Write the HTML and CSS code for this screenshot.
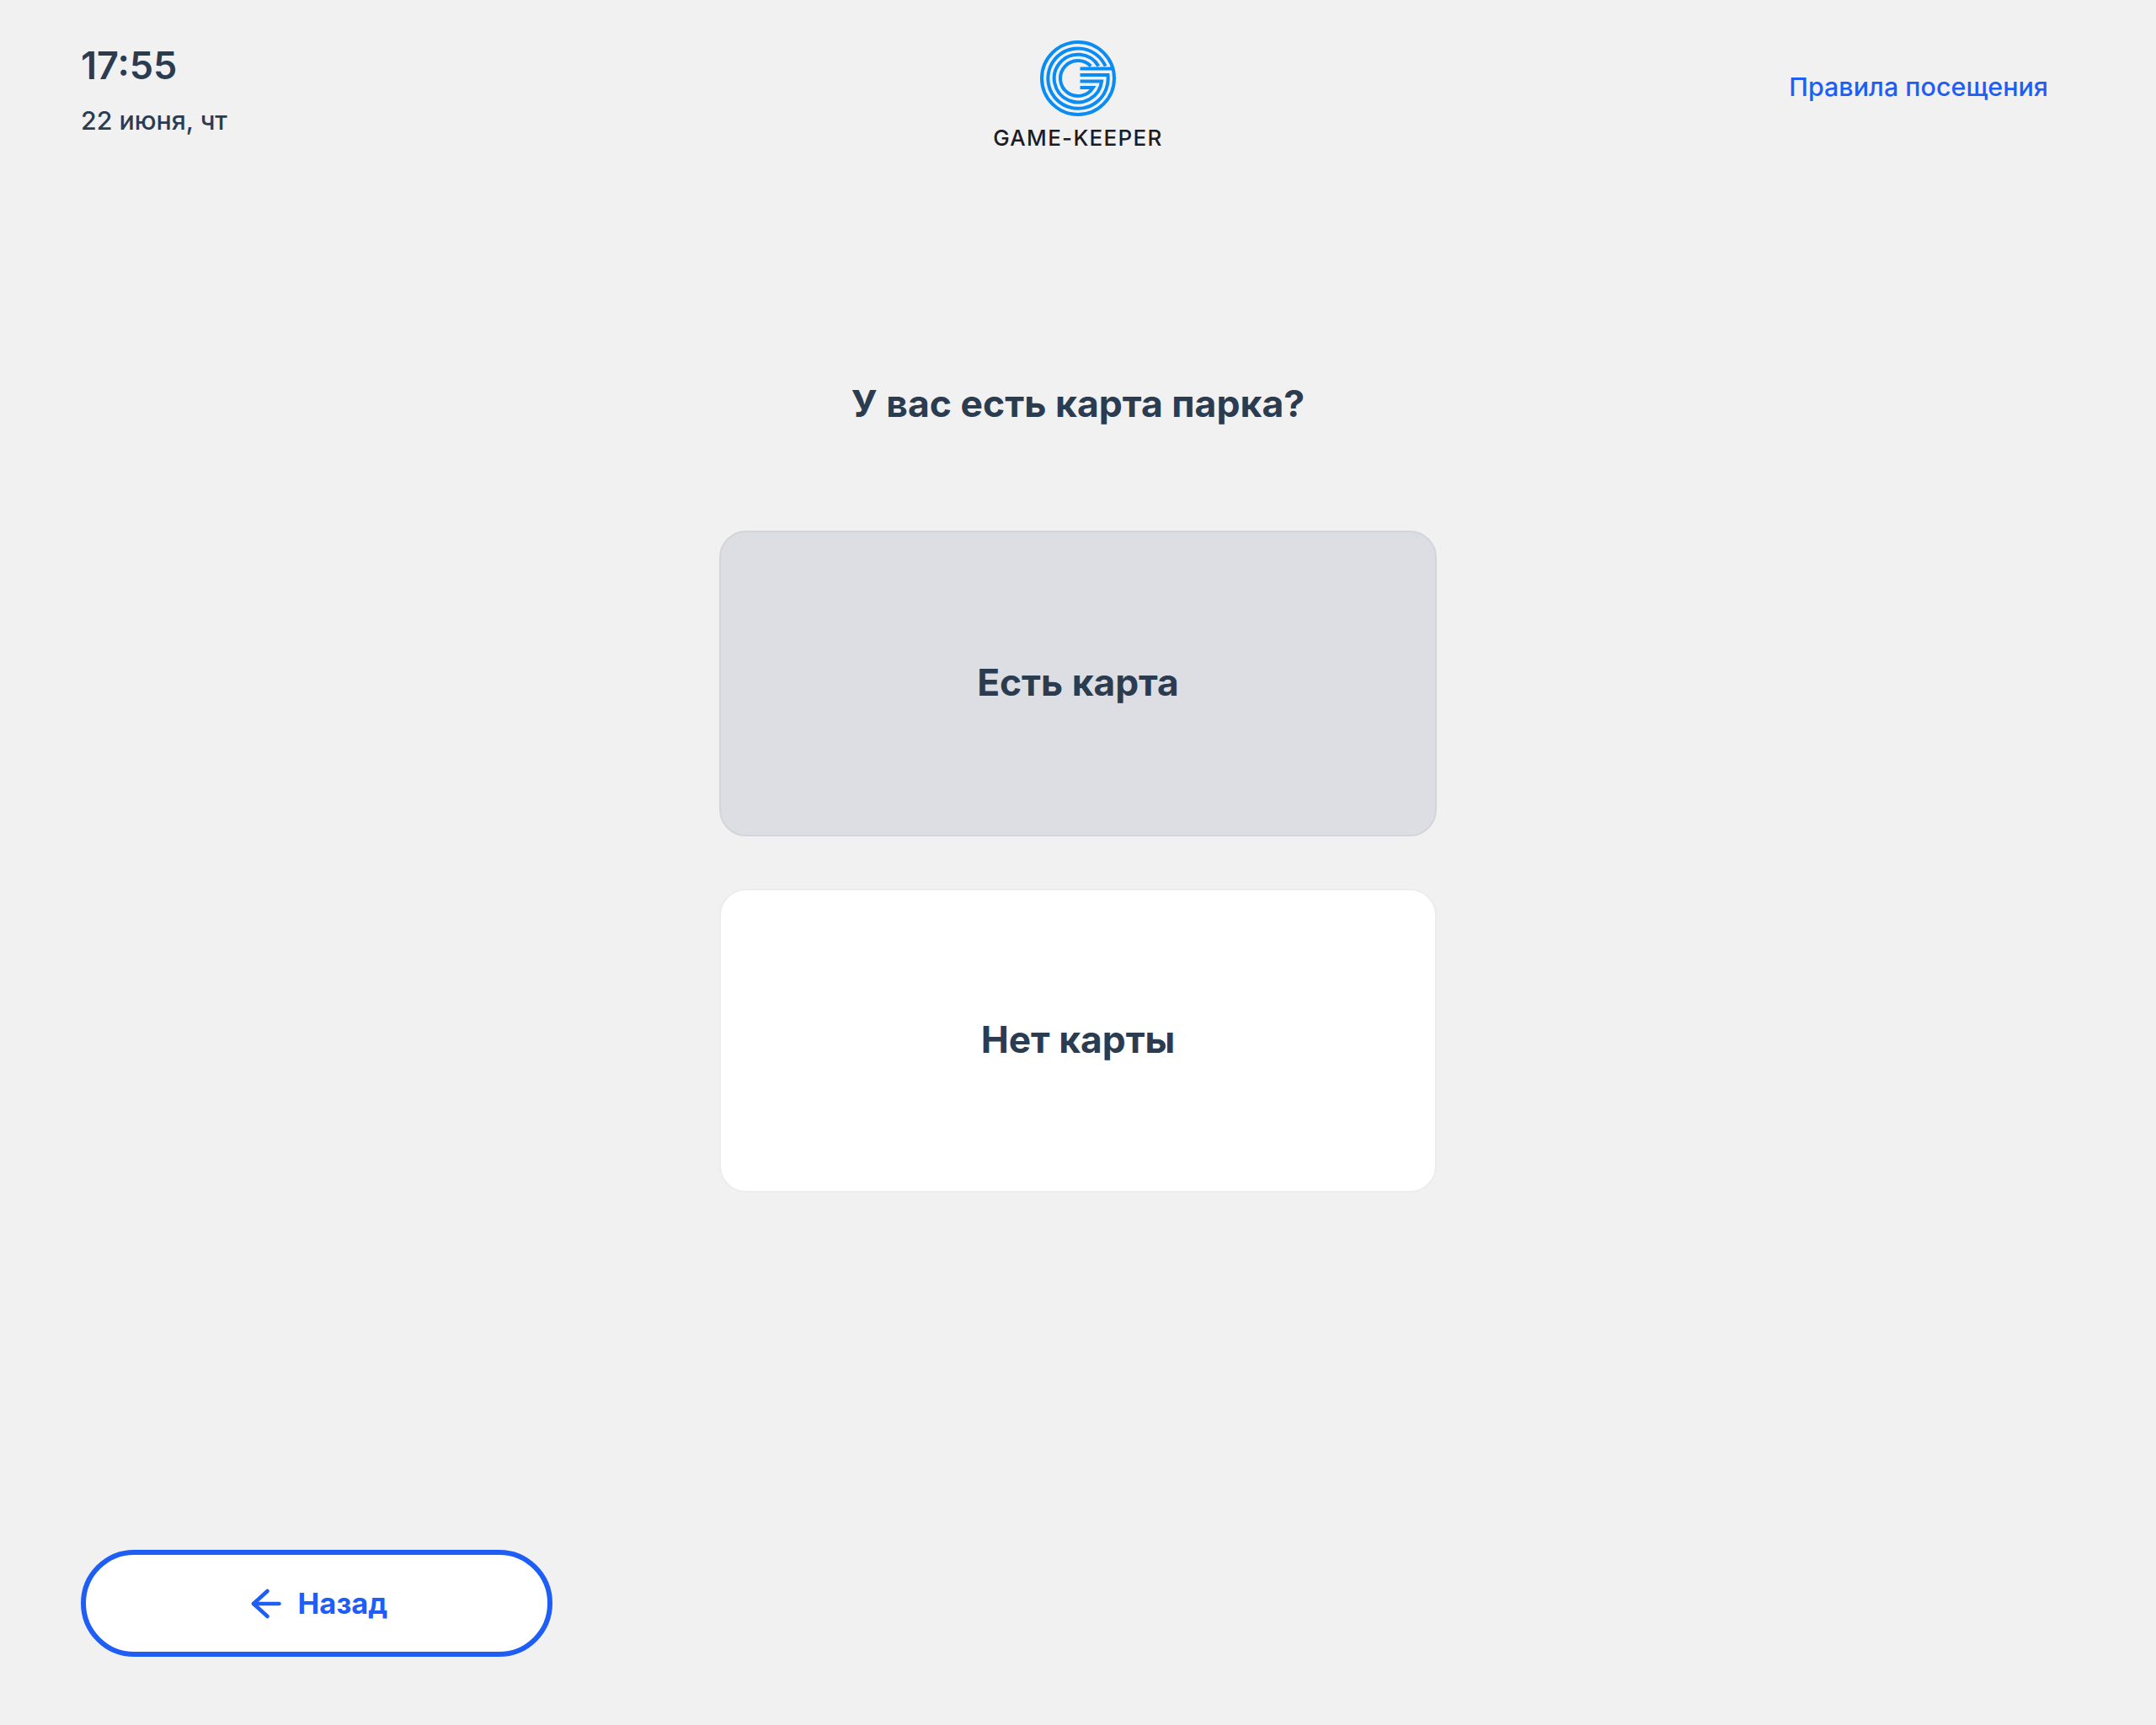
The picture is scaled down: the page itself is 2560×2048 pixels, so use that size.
FILE: index.html

```html
<!DOCTYPE html>
<html lang="ru">
<head>
    <meta charset="UTF-8" />
    <title>Game-Keeper</title>
    <link rel="stylesheet" href="styles.css">
</head>
<body>
    <div class="page">
        <header class="header">
            <div class="clock">
                <div class="clock-time">17:55</div>
                <div class="clock-date">22 июня, чт</div>
            </div>
            <div class="logo">
                <svg class="logo-mark" width="90" height="90" viewBox="0 0 90 90" fill="none" stroke="#0a8cf5" stroke-width="4">
                    <circle cx="45" cy="45" r="43" />
                    <path d="M47.500 33.500H87" />
                    <path d="M47.500 41H80.500A35.700 35.700 0 1 1 77.600 30.500" />
                    <path d="M47.500 48.500H73.100A28.300 28.300 0 1 1 69.300 30.500" />
                    <path d="M47.500 56H62.900A21 21 0 1 1 60.200 30.500" />
                </svg>
                <div class="logo-name">GAME-KEEPER</div>
            </div>
            <a class="rules-link" href="#">Правила посещения</a>
        </header>

        <main class="content">
            <h1 class="question">У вас есть карта парка?</h1>
            <div class="options">
                <button class="option option-active">Есть карта</button>
                <button class="option">Нет карты</button>
            </div>
        </main>

        <footer class="footer">
            <button class="back-btn">
                <svg width="36" height="36" viewBox="0 0 36 36" fill="none" stroke="#1f5ef5" stroke-width="4.500" stroke-linecap="round" stroke-linejoin="round">
                    <path d="M19.500 3L3 18L19.500 33" />
                    <path d="M3 18H33.500" />
                </svg>
                Назад
            </button>
        </footer>
    </div>
</body>
</html>
```

FILE: styles.css

```css
:root {
    --bg: #f1f1f2;
    --text: #2c3c50;
    --accent: #1f5ef5;
}
* {
    box-sizing: border-box;
}
body {
    margin: 0;
    background-color: var(--bg);
    color: var(--text);
    font-family: "Inter", "Noto Sans", sans-serif;
}
.page {
    height: 2048px;
    padding: 48px 128px 81px 96px;
    display: flex;
    flex-direction: column;
}
.header {
    display: grid;
    grid-template-columns: 1fr auto 1fr;
    align-items: start;
}
.clock-time {
    font-size: 45px;
    font-weight: 600;
    line-height: 60px;
}
.clock-date {
    font-size: 30.300px;
    font-weight: 500;
    line-height: 36px;
    margin-top: 17px;
}
.logo {
    display: flex;
    flex-direction: column;
    align-items: center;
    transform: translateX(16px);
}
.logo-name {
    font-size: 26px;
    font-weight: 500;
    line-height: 32px;
    letter-spacing: 1.300px;
    margin-top: 10px;
    color: #1a1c26;
}
.rules-link {
    justify-self: end;
    font-size: 30.500px;
    font-weight: 500;
    line-height: 36px;
    margin-top: 37px;
    color: var(--accent);
    text-decoration: none;
}
.content {
    display: flex;
    flex-direction: column;
    align-items: center;
    margin-left: 32px;
}
.question {
    font-size: 44.500px;
    font-weight: 700;
    line-height: 56px;
    margin: 271px 0 0;
}
.options {
    display: flex;
    flex-direction: column;
    gap: 62px;
    margin-top: 123px;
}
.option {
    width: 852px;
    height: 363px;
    padding: 0 0 3px;
    border: 2px solid #ececee;
    border-radius: 32px;
    background-color: #fff;
    color: var(--text);
    font-family: inherit;
    font-size: 44.300px;
    font-weight: 700;
}
.option + .option {
    height: 361px;
}
.option-active {
    background-color: #dddee3;
    border-color: #d4d5db;
}
.footer {
    margin-top: auto;
}
.back-btn {
    width: 560px;
    height: 127px;
    padding: 0 0 0 6px;
    border: 6px solid var(--accent);
    border-radius: 64px;
    background-color: #fff;
    color: var(--accent);
    font-family: inherit;
    font-size: 34.500px;
    font-weight: 700;
    display: flex;
    align-items: center;
    justify-content: center;
    gap: 20px;
}
```
